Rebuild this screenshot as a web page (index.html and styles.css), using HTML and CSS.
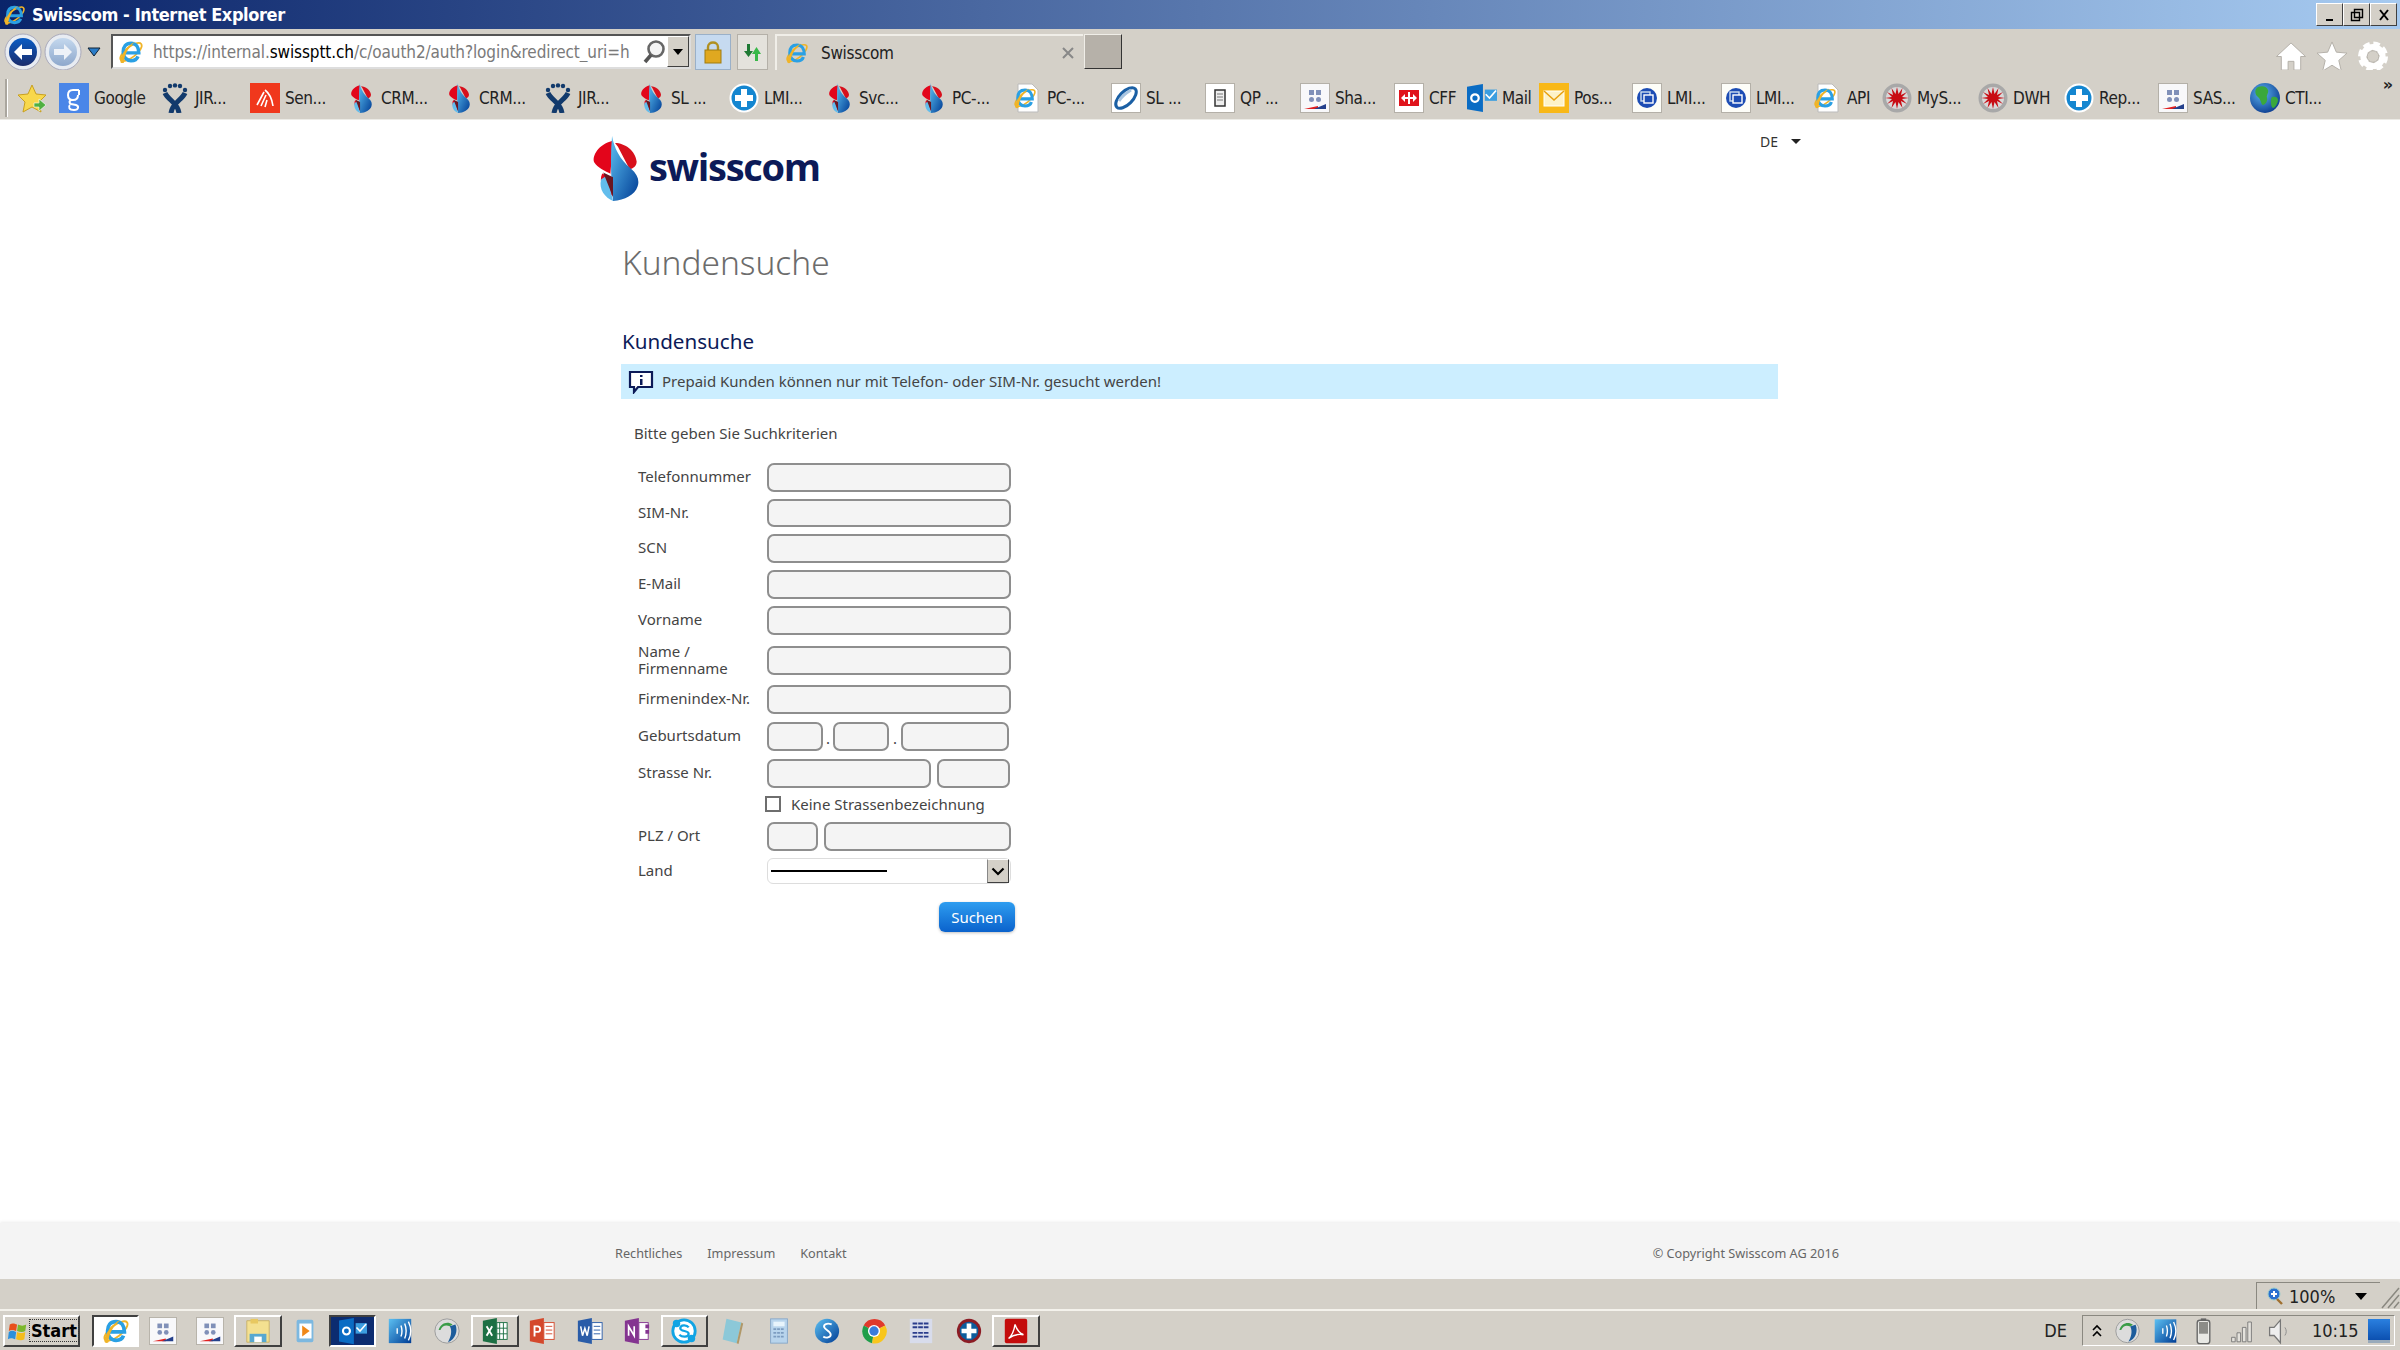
FILE: index.html
```html
<!DOCTYPE html>
<html lang="de">
<head>
    <meta charset="UTF-8">
    <title>Swisscom - Internet Explorer</title>
    <link rel="stylesheet" href="styles.css">
</head>
<body>
<svg class="defs" width="0" height="0">
    <defs>
        <linearGradient id="gBlue" x1="0" y1="0" x2="1" y2="1"><stop offset="0" stop-color="#5cc0f2"/><stop offset="1" stop-color="#003c94"/></linearGradient>
        <linearGradient id="gBack" x1="0" y1="0" x2="0" y2="1"><stop offset="0" stop-color="#0a5cc4"/><stop offset="1" stop-color="#1a2c6c"/></linearGradient>
        <linearGradient id="gForward" x1="0" y1="0" x2="0" y2="1"><stop offset="0" stop-color="#c4d8ee"/><stop offset="1" stop-color="#8ea8cc"/></linearGradient>
        <radialGradient id="gGlobe" cx=".4" cy=".35" r=".7"><stop offset="0" stop-color="#5cb4f0"/><stop offset="1" stop-color="#0c3c90"/></radialGradient>
        <symbol id="i-ie" viewBox="0 0 30 30">
            <ellipse cx="15" cy="15" rx="15" ry="6" transform="rotate(-38 15 15)" fill="none" stroke="#f0b428" stroke-width="2"/>
            <path d="M8 16h16c0-6-3-11-9-11S6 9 6 15s4 10 9 10c4 0 7-2 8-5" fill="none" stroke="#2aa0e4" stroke-width="4"/>
            <path d="M3 27C1 22 9 8 20 3 12 10 7 18 7 27c-1 1-3 1-4 0z" fill="#f0b428"/>
        </symbol>
        <symbol id="i-swiss" viewBox="0 0 48 66">
            <path d="M21 5C8 8 0 20 3 27c3 5 11 9 16 11l3 23C12 56 7 47 11 38l8 4 3-36z" fill="#e3051b"/>
            <path d="M24 7c10 0 21 8 22 19 0 5-4 7-7 8L27 11z" fill="#d8101c"/>
            <path d="M21 0c2 12 8 24 19 33 7 6 9 12 7 18-3 9-13 14-25 15-2-20-3-44-1-66z" fill="url(#gBlue)"/>
            <path d="M16 40l6 26c-8-3-15-12-12-22z" fill="#62bdec"/>
            <path d="M12 37l10 5v20z" fill="#6a1620"/>
        </symbol>
        <symbol id="i-jira" viewBox="0 0 26 30">
            <g fill="#123a6c"><circle cx="8" cy="3" r="2.200"/><circle cx="13" cy="2.400" r="2.200"/><circle cx="18" cy="3" r="2.200"/><circle cx="3" cy="7" r="2.200"/><circle cx="23" cy="7" r="2.200"/></g>
            <path d="M3 10c3 7 13 10 14 20M23 10c-3 7-13 10-14 20" fill="none" stroke="#123a6c" stroke-width="5"/>
        </symbol>
        <symbol id="i-google" viewBox="0 0 30 30">
            <rect width="30" height="30" fill="#4a86e8"/>
            <path d="M20 7h-6c-3 0-5 2-5 5s2 5 5 5 5-2 5-5M20 12v-5M12 17c-2 1-2 3 0 4l5 1c3 1 3 5-2 5s-6-3-4-5" fill="none" stroke="#fff" stroke-width="2"/>
        </symbol>
        <symbol id="i-sen" viewBox="0 0 30 30">
            <rect width="30" height="30" fill="#f0381c"/>
            <path d="M7 22l7-13M11 23l5-11M15 24l2-7M23 23c-1-7-4-13-8-16" fill="none" stroke="#fff" stroke-width="1.600"/>
        </symbol>
        <symbol id="i-plus" viewBox="0 0 30 30">
            <circle cx="15" cy="15" r="14.500" fill="#fff"/><circle cx="15" cy="15" r="12.500" fill="#1486d0"/>
            <path d="M12 6h6v6h6v6h-6v6h-6v-6H6v-6h6z" fill="#fff"/>
        </symbol>
        <symbol id="i-page" viewBox="0 0 30 30">
            <path d="M6 1h14l6 6v22H6z" fill="#fff" stroke="#bbb"/>
            <use href="#i-ie" x="1" y="3" width="24" height="24"/>
        </symbol>
        <symbol id="i-sl" viewBox="0 0 30 30">
            <rect x=".5" y=".5" width="29" height="29" fill="#fff" stroke="#b4b0a8"/>
            <ellipse cx="15" cy="15" rx="13" ry="6.500" transform="rotate(-45 15 15)" fill="none" stroke="#1a5fa4" stroke-width="3"/>
            <path d="M8 18c3-5 7-8 12-11" stroke="#a8c4e0" stroke-width="3" fill="none"/>
        </symbol>
        <symbol id="i-qp" viewBox="0 0 30 30">
            <rect x=".5" y=".5" width="29" height="29" fill="#fff" stroke="#b4b0a8"/>
            <rect x="10" y="7" width="10" height="16" fill="#eee" stroke="#333" stroke-width="1.500"/>
            <path d="M12 11h6M12 14h6M12 17h6" stroke="#777"/>
        </symbol>
        <symbol id="i-sha" viewBox="0 0 30 30">
            <rect x=".5" y=".5" width="29" height="29" fill="#f8f8fa" stroke="#b4b0a8"/>
            <g fill="#8090b8"><rect x="9" y="7" width="5" height="5"/><rect x="16" y="7" width="5" height="5"/><circle cx="11.500" cy="16.500" r="2.500"/><circle cx="18.500" cy="16.500" r="2.500"/></g>
            <path d="M4 26l14-3v3z" fill="#e02020"/><path d="M14 26l12-5v5z" fill="#24408c"/>
        </symbol>
        <symbol id="i-cff" viewBox="0 0 30 30">
            <rect x=".5" y=".5" width="29" height="29" fill="#fff" stroke="#b4b0a8"/>
            <rect x="5" y="7" width="20" height="16" fill="#e0141c"/>
            <path d="M7 15l4-4v3h8v-3l4 4-4 4v-3h-8v3z" fill="#fff"/>
            <path d="M14 9h2v12h-2z" fill="#fff"/>
        </symbol>
        <symbol id="i-outlook" viewBox="0 0 32 30">
            <path d="M0 3l17-3v30L0 27z" fill="#0a6cc4"/>
            <circle cx="8.500" cy="15" r="4" fill="none" stroke="#fff" stroke-width="2.400"/>
            <rect x="19" y="6" width="13" height="12" fill="#3c9ee0"/>
            <path d="M20 11l4 4 7-8" fill="none" stroke="#fff" stroke-width="1.800"/>
        </symbol>
        <symbol id="i-post" viewBox="0 0 30 30">
            <rect width="30" height="30" fill="#f8b818"/>
            <rect x="5" y="8" width="20" height="15" fill="#fdf2c8" stroke="#fff"/>
            <path d="M5 8l10 9 10-9" fill="none" stroke="#e8a010" stroke-width="1.500"/>
        </symbol>
        <symbol id="i-lmi" viewBox="0 0 30 30">
            <rect x=".5" y=".5" width="29" height="29" fill="#fdfdf8" stroke="#b4b0a8"/>
            <circle cx="15" cy="15" r="10" fill="#1c4cb4"/>
            <rect x="9" y="9" width="9" height="9" fill="none" stroke="#cde" stroke-width="1.400"/>
            <rect x="12" y="12" width="9" height="8" fill="#1c4cb4" stroke="#fff" stroke-width="1.400"/>
        </symbol>
        <symbol id="i-burst" viewBox="0 0 30 30">
            <circle cx="15" cy="15" r="14.500" fill="#a8a8a8"/><circle cx="15" cy="15" r="11" fill="#d8d8d8"/>
            <path d="M15 4l1.500 7 4-6-1.500 7 6-3-5 5 7 1-7 1 5 5-6-3 1.500 7-4-6-1.500 7-1.500-7-4 6 1.500-7-6 3 5-5-7-1 7-1-5-5 6 3-1.500-7 4 6z" fill="#c80c14"/>
        </symbol>
        <symbol id="i-globe" viewBox="0 0 30 30">
            <circle cx="15" cy="15" r="15" fill="url(#gGlobe)"/>
            <path d="M8 4c5-2 9 0 10 3s-2 5-1 8-2 7-4 7-2-6-5-8-4-8 0-10zM22 14c3-1 6 0 6 3s-3 8-5 8-3-9-1-11z" fill="#3aa83c"/>
        </symbol>
        <symbol id="i-flag" viewBox="0 0 24 24">
            <path d="M3 5c3-2 5-1 8 0l-1 7c-3-1-5-2-8 0z" fill="#e8501c"/>
            <path d="M12 5c3 1 5 2 9 0l-1 7c-3 2-6 1-9 0z" fill="#7cb82c"/>
            <path d="M2 13c3-2 5-1 8 0l-1 8c-3-1-5-2-8 0z" fill="#2c90dc"/>
            <path d="M11 13c3 1 5 2 9 0l-1 8c-3 2-6 1-9 0z" fill="#f4bc1c"/>
        </symbol>
        <symbol id="i-folder" viewBox="0 0 30 30">
            <path d="M3 4h24v23H3z" fill="#f4e090" stroke="#c8b068"/>
            <path d="M6 18h18v9H6z" fill="#58a8d0"/><path d="M11 21h8v6h-8z" fill="#fff"/><path d="M7 2h8v5H7z" fill="#e8c860"/>
        </symbol>
        <symbol id="i-media" viewBox="0 0 30 30">
            <rect x="6" y="3" width="18" height="24" rx="2" fill="#7cb8e0"/><rect x="9" y="7" width="13" height="16" fill="#fff"/>
            <path d="M12 9l8 6-8 6z" fill="#f08818"/>
        </symbol>
        <symbol id="i-wifi" viewBox="0 0 30 30">
            <path d="M3 2h24v26H3z" fill="url(#gBlue)"/>
            <path d="M12 12v6M16 9c1.500 4 1.500 8 0 12M20 7c2 5 2 11 0 16M24 5c3 6 3 14 0 20" fill="none" stroke="#fff" stroke-width="1.500"/>
        </symbol>
        <symbol id="i-lync" viewBox="0 0 30 30">
            <circle cx="15" cy="15" r="13" fill="#dcdcdc" stroke="#999"/>
            <path d="M6 14c2-7 9-10 15-6l-3 2c-4-2-8-1-10 4z" fill="#3a9c48"/>
            <path d="M24 8c3 7 0 16-8 19 3-5 5-12 2-17z" fill="#1c5c9c"/>
        </symbol>
        <symbol id="i-excel" viewBox="0 0 30 30">
            <path d="M2 4l15-3v28L2 26z" fill="#1c7044"/><rect x="17" y="6" width="11" height="18" fill="#fff" stroke="#1c7044"/>
            <path d="M6 10l6 10M12 10l-6 10" stroke="#fff" stroke-width="2"/><path d="M20 6v18M24 6v18M17 12h11M17 18h11" stroke="#1c7044"/>
        </symbol>
        <symbol id="i-ppt" viewBox="0 0 30 30">
            <path d="M2 4l15-3v28L2 26z" fill="#d4482c"/><rect x="17" y="6" width="11" height="18" fill="#fff" stroke="#d4482c"/>
            <path d="M7 21V10h3c4 0 4 6 0 6H7" fill="none" stroke="#fff" stroke-width="2"/><path d="M19 10h7M19 14h7M19 18h7" stroke="#d4482c"/>
        </symbol>
        <symbol id="i-word" viewBox="0 0 30 30">
            <path d="M2 4l15-3v28L2 26z" fill="#2a5ca8"/><rect x="17" y="6" width="11" height="18" fill="#fff" stroke="#2a5ca8"/>
            <path d="M5 10l2 10 2.500-8 2.500 8 2-10" fill="none" stroke="#fff" stroke-width="1.600"/><path d="M19 10h7M19 14h7M19 18h7" stroke="#2a5ca8"/>
        </symbol>
        <symbol id="i-one" viewBox="0 0 30 30">
            <path d="M2 4l15-3v28L2 26z" fill="#843490"/><rect x="17" y="6" width="10" height="18" fill="#fff" stroke="#843490"/>
            <path d="M6 20V10l6 10V10" fill="none" stroke="#fff" stroke-width="1.800"/><path d="M24 8h4v4h-4zM24 14h4v4h-4z" fill="#843490"/>
        </symbol>
        <symbol id="i-skype" viewBox="0 0 30 30">
            <circle cx="15" cy="15" r="12" fill="#fff" stroke="#10a4e4" stroke-width="3"/>
            <circle cx="7" cy="7" r="4" fill="#10a4e4"/><circle cx="23" cy="23" r="4" fill="#10a4e4"/>
            <path d="M20 11c-2-3-9-3-9 1 0 4 9 2 9 6 0 4-7 4-10 1" fill="none" stroke="#10a4e4" stroke-width="2.400"/>
        </symbol>
        <symbol id="i-note" viewBox="0 0 30 30">
            <path d="M9 2l16 4-5 22-15-4z" fill="#8cc8d8"/><path d="M25 6l2 1-5 22-2-1z" fill="#b09868"/>
        </symbol>
        <symbol id="i-calc" viewBox="0 0 30 30">
            <rect x="6" y="2" width="18" height="26" fill="#b8d4ec" stroke="#88a8c8"/><rect x="9" y="5" width="12" height="5" fill="#e8f4fc"/>
            <path d="M9 13h12M9 17h12M9 21h12" stroke="#7c9cc0" stroke-dasharray="3 1" stroke-width="2"/>
        </symbol>
        <symbol id="i-sphere" viewBox="0 0 30 30">
            <circle cx="15" cy="15" r="13" fill="url(#gBlue)"/>
            <path d="M20 8c-5-2-9 0-8 3 1 3 7 4 7 8 0 3-5 4-8 2" fill="none" stroke="#fff" stroke-width="2"/>
        </symbol>
        <symbol id="i-chrome" viewBox="0 0 30 30">
            <path d="M15 15L4 9a13 13 0 0 1 23 0z" fill="#e0392c"/><path d="M15 15L4 9a13 13 0 0 0 9 19z" fill="#1f9e4a"/><path d="M15 15l12-6a13 13 0 0 1-14 19z" fill="#f8c61c"/>
            <circle cx="15" cy="15" r="6.500" fill="#fff"/><circle cx="15" cy="15" r="5" fill="#3a7cdc"/>
        </symbol>
        <symbol id="i-pdark" viewBox="0 0 30 30">
            <circle cx="15" cy="15" r="13" fill="#8c1c24"/><circle cx="15" cy="15" r="10" fill="#0c5c9c"/>
            <path d="M12.500 7h5v5.500H23v5h-5.500V23h-5v-5.500H7v-5h5.500z" fill="#fff"/>
        </symbol>
        <symbol id="i-pdf" viewBox="0 0 30 30">
            <rect x="3" y="2" width="24" height="26" rx="2" fill="#c40c0c"/>
            <path d="M7 23c4-3 6-9 7-15 2 6 4 9 9 11-5-1-11 0-16 4z" fill="none" stroke="#fff" stroke-width="1.500"/>
        </symbol>
        <symbol id="i-sym" viewBox="0 0 30 30">
            <rect x="3" y="2" width="24" height="26" fill="#d8dcec"/>
            <path d="M6 7h18M6 11h18M6 17h18M6 21h18" stroke="#2a3c8c" stroke-width="2" stroke-dasharray="5 1"/>
        </symbol>
    </defs>
</svg>

<div class="window">
    <div class="titlebar">
        <svg class="title-icon"><use href="#i-ie"/></svg>
        <span class="title-text">Swisscom - Internet Explorer</span>
        <div class="win-buttons">
            <button class="win-btn"><svg width="12" height="14"><path d="M2 11h7v2H2z" fill="#000"/></svg></button>
            <button class="win-btn"><svg width="14" height="14"><path d="M4.500 1.500h8v8h-8zM1.500 4.500h8v8h-8z" fill="#d4d0c8" stroke="#000" stroke-width="1.400"/></svg></button>
            <button class="win-btn"><svg width="14" height="14"><path d="M3 2l8 10M11 2L3 12" stroke="#000" stroke-width="2"/></svg></button>
        </div>
    </div>

    <div class="toolbar">
        <svg class="nav-btn" viewBox="0 0 38 38"><circle cx="19" cy="19" r="18" fill="#e8ecf2" stroke="#aab"/><circle cx="19" cy="19" r="14" fill="url(#gBack)"/><path d="M10 19l8-8v5h10v6H18v5z" fill="#fff"/></svg>
        <svg class="nav-btn" viewBox="0 0 38 38"><circle cx="19" cy="19" r="18" fill="#e8ecf2" stroke="#aab"/><circle cx="19" cy="19" r="14" fill="url(#gForward)"/><path d="M28 19l-8-8v5H10v6h10v5z" fill="#eef2f8"/></svg>
        <svg class="nav-drop" viewBox="0 0 14 10"><path d="M1 1h12L7 9z" fill="#2a7cc8" stroke="#123"/></svg>
        <div class="addressbar">
            <svg class="addr-icon"><use href="#i-ie"/></svg>
            <span class="url"><span class="url-dim">https://internal.</span><b>swissptt.ch</b><span class="url-dim">/c/oauth2/auth?login&amp;redirect_uri=h</span></span>
            <svg class="addr-search" viewBox="0 0 24 26"><circle cx="14" cy="10" r="7.500" fill="#f4f4f4" stroke="#666" stroke-width="2.600"/><path d="M9 16l-6 7" stroke="#555" stroke-width="3.600"/></svg>
            <div class="addr-drop"><svg width="10" height="6"><path d="M0 0h10L5 6z" fill="#000"/></svg></div>
        </div>
        <div class="lock-btn"><svg width="18" height="24" viewBox="0 0 18 24"><path d="M4 11V7c0-6 10-6 10 0v4" fill="none" stroke="#b09020" stroke-width="2.400"/><rect x="1" y="10" width="16" height="13" fill="#e0a820" stroke="#a07c10"/></svg></div>
        <div class="refresh-btn"><svg width="20" height="22" viewBox="0 0 20 22"><path d="M4 3h3v7h3l-4.500 6L1 10h3z" fill="#1f7a34"/><path d="M15 20h-3v-7H9l4.500-7 4.500 7h-3z" fill="#38b848"/></svg></div>
        <div class="tab">
            <svg class="tab-icon"><use href="#i-ie"/></svg>
            <span class="tab-text">Swisscom</span>
            <svg class="tab-close" width="14" height="14"><path d="M2 2l10 10M12 2L2 12" stroke="#888" stroke-width="2"/></svg>
        </div>
        <div class="new-tab"></div>
        <div class="tool-right">
            <svg class="tool-icon" viewBox="0 0 32 32"><path d="M16 2L1 16h5v14h7v-9h6v9h7V16h5z" fill="#fff" stroke="#b4b0a8"/></svg>
            <svg class="tool-icon" viewBox="0 0 32 32"><path d="M16 1l4.500 10.500 11 1-8.500 7.500 2.600 11L16 25l-9.600 6L9 20 .5 12.500l11-1z" fill="#fff" stroke="#b4b0a8"/></svg>
            <svg class="tool-icon" viewBox="0 0 32 32"><circle cx="16" cy="16" r="10" fill="none" stroke="#fff" stroke-width="6"/><circle cx="16" cy="16" r="10" fill="none" stroke="#fff" stroke-width="11" stroke-dasharray="5 2.850"/><circle cx="16" cy="16" r="6" fill="#d4d0c8" stroke="#b4b0a8"/></svg>
        </div>
    </div>

    <div class="favbar">
        <div class="fav-sep"></div>
        <svg class="fav-star" viewBox="0 0 30 30"><path d="M14 2l4 9 10 1-7 7 2 10-9-5-9 5 2-10-7-7 10-1z" fill="#f8d84c" stroke="#c8a020"/><path d="M16 20h5v-4l7 6-7 6v-4h-5z" fill="#50b040" stroke="#fff" stroke-width=".6"/></svg>
        <div class="fav-list">
            <a class="fav"><svg class="fav-icon"><use href="#i-google"/></svg>Google</a>
            <a class="fav"><svg class="fav-icon"><use href="#i-jira"/></svg>JIR...</a>
            <a class="fav"><svg class="fav-icon"><use href="#i-sen"/></svg>Sen...</a>
            <a class="fav"><svg class="fav-icon"><use href="#i-swiss"/></svg>CRM...</a>
            <a class="fav"><svg class="fav-icon"><use href="#i-swiss"/></svg>CRM...</a>
            <a class="fav"><svg class="fav-icon"><use href="#i-jira"/></svg>JIR...</a>
            <a class="fav"><svg class="fav-icon"><use href="#i-swiss"/></svg>SL ...</a>
            <a class="fav"><svg class="fav-icon"><use href="#i-plus"/></svg>LMI...</a>
            <a class="fav"><svg class="fav-icon"><use href="#i-swiss"/></svg>Svc...</a>
            <a class="fav"><svg class="fav-icon"><use href="#i-swiss"/></svg>PC-...</a>
            <a class="fav"><svg class="fav-icon"><use href="#i-page"/></svg>PC-...</a>
            <a class="fav"><svg class="fav-icon"><use href="#i-sl"/></svg>SL ...</a>
            <a class="fav"><svg class="fav-icon"><use href="#i-qp"/></svg>QP ...</a>
            <a class="fav"><svg class="fav-icon"><use href="#i-sha"/></svg>Sha...</a>
            <a class="fav"><svg class="fav-icon"><use href="#i-cff"/></svg>CFF</a>
            <a class="fav"><svg class="fav-icon"><use href="#i-outlook"/></svg>Mail</a>
            <a class="fav"><svg class="fav-icon"><use href="#i-post"/></svg>Pos...</a>
            <a class="fav"><svg class="fav-icon"><use href="#i-lmi"/></svg>LMI...</a>
            <a class="fav"><svg class="fav-icon"><use href="#i-lmi"/></svg>LMI...</a>
            <a class="fav"><svg class="fav-icon"><use href="#i-page"/></svg>API</a>
            <a class="fav"><svg class="fav-icon"><use href="#i-burst"/></svg>MyS...</a>
            <a class="fav"><svg class="fav-icon"><use href="#i-burst"/></svg>DWH</a>
            <a class="fav"><svg class="fav-icon"><use href="#i-plus"/></svg>Rep...</a>
            <a class="fav"><svg class="fav-icon"><use href="#i-sha"/></svg>SAS...</a>
            <a class="fav"><svg class="fav-icon"><use href="#i-globe"/></svg>CTI...</a>
        </div>
        <span class="fav-more">»</span>
    </div>

    <main class="content">
        <div class="page-head">
            <div class="logo">
                <svg class="logo-mark"><use href="#i-swiss"/></svg>
                <span class="logo-text">swisscom</span>
            </div>
            <div class="lang">DE <svg width="10" height="5"><path d="M0 0h10L5 5z" fill="#222"/></svg></div>
        </div>

        <div class="page-body">
            <h1>Kundensuche</h1>
            <h2>Kundensuche</h2>
            <div class="notice">
                <svg class="notice-icon" viewBox="0 0 26 24"><path d="M2 2h22v15H10l-4 5v-5H2z" fill="#fff" stroke="#0c1a58" stroke-width="2.200"/><path d="M12 5h2.500v2H12zM12 9h2.500v6H12z" fill="#0c1a58"/></svg>
                <span>Prepaid Kunden können nur mit Telefon- oder SIM-Nr. gesucht werden!</span>
            </div>
            <p class="hint">Bitte geben Sie Suchkriterien</p>

            <form class="search-form">
                <div class="row row-first"><label>Telefonnummer</label><input class="field-full"></div>
                <div class="row row-sim"><label>SIM-Nr.</label><input class="field-full"></div>
                <div class="row"><label>SCN</label><input class="field-full"></div>
                <div class="row"><label>E-Mail</label><input class="field-full"></div>
                <div class="row"><label>Vorname</label><input class="field-full"></div>
                <div class="row row-name"><label>Name /<br>Firmenname</label><input class="field-full"></div>
                <div class="row row-index"><label>Firmenindex-Nr.</label><input class="field-full"></div>
                <div class="row row-date">
                    <label>Geburtsdatum</label>
                    <input class="f-day"><span class="dot">.</span><input class="f-day"><span class="dot">.</span><input class="f-year">
                </div>
                <div class="row row-date">
                    <label>Strasse Nr.</label>
                    <input class="f-street"><input class="f-no">
                </div>
                <div class="row-check">
                    <span class="check"></span>
                    <span>Keine Strassenbezeichnung</span>
                </div>
                <div class="row row-plz">
                    <label>PLZ / Ort</label>
                    <input class="f-plz"><input class="f-ort">
                </div>
                <div class="row row-land">
                    <label>Land</label>
                    <div class="select">
                        <span class="select-line"></span>
                        <span class="select-btn"><svg width="14" height="9"><path d="M1.500 1.500L7 7l5.500-5.500" fill="none" stroke="#000" stroke-width="2.200"/></svg></span>
                    </div>
                </div>
                <div class="form-actions"><button type="button" class="btn-search">Suchen</button></div>
            </form>
        </div>
    </main>

    <footer class="site-footer">
        <nav class="footer-links"><a>Rechtliches</a><a>Impressum</a><a>Kontakt</a></nav>
        <span class="copyright">© Copyright Swisscom AG 2016</span>
    </footer>

    <div class="statusbar">
        <div class="zoom-box">
            <svg width="16" height="18" viewBox="0 0 16 18"><circle cx="7" cy="7" r="6" fill="#2a70d0" stroke="#9cc"/><path d="M4 7h6M7 4v6" stroke="#fff" stroke-width="2"/><path d="M10 12l5 5" stroke="#a07030" stroke-width="2.400"/></svg>
            <span class="zoom-text">100%</span>
            <svg class="zoom-arrow" width="12" height="7"><path d="M0 0h12L6 7z" fill="#000"/></svg>
        </div>
        <svg class="grip" width="20" height="27"><path d="M2 26L19 6M8 26L19 13M14 26l5-6" stroke="#8a8880" stroke-width="1.500"/></svg>
    </div>

    <div class="taskbar">
        <button class="start-btn"><svg width="24" height="24"><use href="#i-flag"/></svg><span class="start-text">Start</span></button>
        <div class="task-list">
            <span class="task task-pressed"><svg class="task-icon"><use href="#i-ie"/></svg></span>
            <span class="task"><svg class="task-icon"><use href="#i-sha"/></svg></span>
            <span class="task"><svg class="task-icon"><use href="#i-sha"/></svg></span>
            <span class="task task-raised"><svg class="task-icon"><use href="#i-folder"/></svg></span>
            <span class="task"><svg class="task-icon"><use href="#i-media"/></svg></span>
            <span class="task task-dark"><svg class="task-icon"><use href="#i-outlook"/></svg></span>
            <span class="task"><svg class="task-icon"><use href="#i-wifi"/></svg></span>
            <span class="task"><svg class="task-icon"><use href="#i-lync"/></svg></span>
            <span class="task task-raised"><svg class="task-icon"><use href="#i-excel"/></svg></span>
            <span class="task"><svg class="task-icon"><use href="#i-ppt"/></svg></span>
            <span class="task"><svg class="task-icon"><use href="#i-word"/></svg></span>
            <span class="task"><svg class="task-icon"><use href="#i-one"/></svg></span>
            <span class="task task-raised"><svg class="task-icon"><use href="#i-skype"/></svg></span>
            <span class="task"><svg class="task-icon"><use href="#i-note"/></svg></span>
            <span class="task"><svg class="task-icon"><use href="#i-calc"/></svg></span>
            <span class="task"><svg class="task-icon"><use href="#i-sphere"/></svg></span>
            <span class="task"><svg class="task-icon"><use href="#i-chrome"/></svg></span>
            <span class="task"><svg class="task-icon"><use href="#i-sym"/></svg></span>
            <span class="task"><svg class="task-icon"><use href="#i-pdark"/></svg></span>
            <span class="task task-raised"><svg class="task-icon"><use href="#i-pdf"/></svg></span>
        </div>
        <span class="kbd-lang">DE</span>
        <div class="tray">
            <svg class="tray-chevron" width="10" height="14"><path d="M1 6l4-4 4 4M1 12l4-4 4 4" fill="none" stroke="#000" stroke-width="1.600"/></svg>
            <svg class="tray-icon"><use href="#i-lync"/></svg>
            <svg class="tray-icon"><use href="#i-wifi"/></svg>
            <svg class="tray-icon" viewBox="0 0 30 30"><rect x="8" y="3" width="14" height="26" rx="3" fill="#e8e8e4" stroke="#666" stroke-width="1.500"/><rect x="10" y="5" width="10" height="13" fill="#8c8c88"/><rect x="12" y="1" width="6" height="2" fill="#666"/></svg>
            <svg class="tray-icon" viewBox="0 0 30 30"><path d="M4 27v-5h4v5zM10 27V17h4v10zM16 27V11h4v16zM22 27V5h4v22z" fill="#e4e2dc" stroke="#777"/></svg>
            <svg class="tray-icon" viewBox="0 0 30 30"><path d="M4 11h5l7-8v25l-7-8H4z" fill="#eee" stroke="#777" stroke-width="1.400"/><path d="M21 11c2 3 2 6 0 9" fill="none" stroke="#888"/></svg>
            <span class="clock">10:15</span>
            <span class="show-desktop"></span>
        </div>
    </div>
</div>
</body>
</html>
```

FILE: styles.css
```css
* {
    box-sizing: border-box;
}

html, body {
    margin: 0;
    padding: 0;
}

body {
    font-family: "Noto Sans", Arial, sans-serif;
    color: #444;
    background-color: #fff;
}

.defs {
    position: absolute;
}

.window {
    width: 2400px;
    height: 1350px;
    display: flex;
    flex-direction: column;
    overflow: hidden;
}

/* IE chrome */
.titlebar {
    height: 29px;
    flex: none;
    display: flex;
    align-items: center;
    padding-left: 3px;
    background: linear-gradient(to right, #0a246a, #a6caf0);
}

.title-icon {
    width: 23px;
    height: 24px;
}

.title-text {
    margin-left: 6px;
    font-family: "DejaVu Sans Condensed", "DejaVu Sans", sans-serif;
    font-size: 18px;
    font-weight: 700;
    letter-spacing: -.4px;
    color: #fff;
}

.win-buttons {
    margin-left: auto;
    margin-right: 3px;
    display: flex;
}

.win-btn {
    width: 27px;
    height: 23px;
    padding: 0;
    display: flex;
    align-items: center;
    justify-content: center;
    background-color: #d4d0c8;
    border: 1px solid;
    border-color: #fff #404040 #404040 #fff;
}

.toolbar {
    height: 41px;
    flex: none;
    display: flex;
    align-items: center;
    padding-top: 4px;
    padding-left: 4px;
    background-color: #d4d0c8;
}

.nav-btn {
    width: 38px;
    height: 38px;
    margin-right: 2px;
}

.nav-drop {
    width: 14px;
    height: 10px;
    margin: 0 10px 0 3px;
}

.addressbar {
    width: 580px;
    height: 35px;
    display: flex;
    align-items: center;
    padding-left: 5px;
    background-color: #fff;
    border: 2px solid;
    border-color: #555 #ddd #ddd #555;
}

.addr-icon {
    width: 26px;
    height: 28px;
}

.url {
    width: 480px;
    margin-left: 9px;
    font-family: "DejaVu Sans Condensed", "DejaVu Sans", sans-serif;
    font-size: 17px;
    letter-spacing: -.1px;
    white-space: nowrap;
    overflow: hidden;
    color: #000;
}

.url b {
    font-weight: 400;
}

.url-dim {
    color: #7a7a7a;
}

.addr-search {
    width: 24px;
    height: 26px;
    margin-left: 9px;
}

.addr-drop {
    width: 22px;
    height: 31px;
    margin-left: auto;
    display: flex;
    align-items: center;
    justify-content: center;
    background-color: #d4d0c8;
    border: 1px solid;
    border-color: #fff #404040 #404040 #fff;
}

.lock-btn {
    width: 36px;
    height: 36px;
    margin-left: 4px;
    display: flex;
    align-items: center;
    justify-content: center;
    background-color: #c6daf0;
    border: 1px solid #9ab0c8;
}

.refresh-btn {
    width: 31px;
    height: 36px;
    margin-left: 6px;
    display: flex;
    align-items: center;
    justify-content: center;
    background-color: #e4e2dc;
    border: 1px solid #b4b0a8;
}

.tab {
    width: 308px;
    height: 36px;
    margin-left: 7px;
    display: flex;
    align-items: center;
    padding-left: 8px;
    border-top: 2px solid #f0eee8;
    border-left: 2px solid #f0eee8;
}

.tab-icon {
    width: 24px;
    height: 26px;
}

.tab-text {
    margin-left: 12px;
    font-family: "DejaVu Sans Condensed", "DejaVu Sans", sans-serif;
    font-size: 17px;
    letter-spacing: -.3px;
    color: #222;
}

.tab-close {
    margin-left: auto;
    margin-right: 8px;
}

.new-tab {
    width: 38px;
    height: 35px;
    margin-left: 1px;
    background-color: #b6b1a9;
    border: 1px solid;
    border-color: #f0eee8 #333 #333 #f0eee8;
}

.tool-right {
    margin-left: auto;
    margin-top: 10px;
    margin-right: 11px;
    display: flex;
    gap: 9px;
}

.tool-icon {
    width: 32px;
    height: 31px;
}

.favbar {
    height: 50px;
    flex: none;
    display: flex;
    align-items: center;
    position: relative;
    padding-top: 6px;
    padding-left: 5px;
    background-color: #d4d0c8;
    border-bottom: 1px solid #ecebe6;
}

.fav-sep {
    width: 3px;
    height: 38px;
    background-color: #aaa69e;
    border-right: 1px solid #fff;
}

.fav-star {
    width: 30px;
    height: 30px;
    margin-left: 10px;
    margin-right: 11px;
}

/* each bookmark keeps the width IE gave it */
.fav-list {
    display: grid;
    grid-template-columns: 101px 90px 96px 98px 99px 93px 93px 95px 93px 95px 99px 94px 95px 94px 73px 72px 93px 89px 91px 70px 96px 86px 94px 92px auto;
}

.fav {
    display: flex;
    align-items: center;
    gap: 5px;
    font-family: "DejaVu Sans Condensed", "DejaVu Sans", sans-serif;
    font-size: 17px;
    letter-spacing: -.4px;
    color: #222;
}

.fav-icon {
    width: 30px;
    height: 30px;
    flex: none;
}

.fav-more {
    position: absolute;
    top: 5px;
    right: 7px;
    font-family: "DejaVu Sans", sans-serif;
    font-size: 16px;
    font-weight: 700;
    color: #222;
}

/* page */
.content {
    flex: 1;
    padding-top: 17px;
    padding-left: 591px;
}

.page-head {
    width: 1211px;
    display: flex;
    justify-content: space-between;
}

.logo {
    height: 65px;
    display: flex;
    align-items: flex-start;
}

.logo-mark {
    width: 48px;
    height: 65px;
    margin-top: -1px;
}

.logo-text {
    margin-left: 10px;
    margin-top: 4px;
    font-family: "Open Sans", sans-serif;
    font-size: 38px;
    line-height: 50px;
    font-weight: 700;
    letter-spacing: -1.300px;
    color: #0c1a58;
}

.lang {
    margin-top: -5px;
    padding-right: 1px;
    display: flex;
    align-items: center;
    gap: 13px;
    height: 18px;
    font-size: 14px;
    color: #333;
}

.page-body {
    margin-left: 30px;
    width: 1157px;
}

h1 {
    margin: 40px 0 0 1px;
    font-family: "Noto Sans", sans-serif;
    font-size: 33.400px;
    line-height: 40px;
    font-weight: 300;
    color: #6c6c6c;
}

h2 {
    margin: 46px 0 0 1px;
    font-size: 20.600px;
    line-height: 26px;
    font-weight: 400;
    color: #0c1a58;
}

.notice {
    height: 35px;
    margin-top: 10px;
    display: flex;
    align-items: center;
    padding-left: 7px;
    padding-bottom: 2px;
    font-size: 15px;
    background-color: #cceeff;
}

.notice-icon {
    width: 26px;
    height: 24px;
    margin-top: 3px;
    margin-right: 8px;
}

.hint {
    margin: 24px 0 0 13px;
    font-size: 15px;
    line-height: 20px;
}

.search-form {
    margin-top: 20px;
    padding-left: 17px;
    font-size: 15px;
}

.row {
    height: 29px;
    margin-top: 7px;
    display: flex;
    align-items: center;
}

.row-first {
    margin-top: 0;
}

.row-sim {
    height: 28px;
}

.row-name {
    margin-top: 11px;
}

.row-index {
    margin-top: 10px;
}

.row-date {
    margin-top: 8px;
}

.row-plz {
    margin-top: 10px;
}

.row-land {
    height: 26px;
}

.row label {
    width: 129px;
    flex: none;
    margin-top: -2px;
    line-height: 17px;
}

.row input {
    height: 100%;
    padding: 0;
    background-color: #f4f4f4;
    border: 2px solid #8e8e8e;
    border-radius: 7px;
}

.field-full {
    width: 244px;
}

.f-day {
    width: 56px;
}

.dot {
    width: 10px;
    text-align: center;
    margin-top: 4px;
    line-height: 1;
}

.f-day + .dot + .f-day + .dot {
    width: 12px;
}

.f-year {
    width: 108px;
}

.f-street {
    width: 164px;
}

.f-no {
    width: 73px;
    margin-left: 6px;
}

.f-plz {
    width: 51px;
}

.f-ort {
    width: 187px;
    margin-left: 6px;
}

.row-check {
    height: 16px;
    margin-top: 8px;
    margin-left: 127px;
    display: flex;
    align-items: center;
    gap: 10px;
}

.check {
    width: 16px;
    height: 16px;
    background-color: #fff;
    border: 2px solid #6e6e6e;
}

.select {
    width: 244px;
    height: 26px;
    display: flex;
    align-items: center;
    justify-content: space-between;
    padding: 0 1px 0 3px;
    background-color: #fff;
    border: 1px solid #ddd;
    border-radius: 6px;
}

.select-line {
    width: 116px;
    height: 2px;
    background-color: #000;
}

.select-btn {
    width: 22px;
    height: 24px;
    display: flex;
    align-items: center;
    justify-content: center;
    background-color: #d4d0c8;
    border: 1px solid;
    border-color: #fff #404040 #404040 #888;
}

.form-actions {
    margin-top: 18px;
    padding-left: 301px;
}

.btn-search {
    width: 76px;
    height: 30px;
    padding: 0;
    font-family: inherit;
    font-size: 15px;
    color: #fff;
    background: linear-gradient(to bottom, #2e9df0, #0a62cc);
    border: none;
    border-radius: 6px;
    box-shadow: 0 1px 3px rgba(0, 0, 0, .25);
}

/* footer */
.site-footer {
    height: 56px;
    flex: none;
    display: flex;
    align-items: center;
    padding-top: 4px;
    padding-left: 615px;
    background-color: #f4f4f4;
    box-shadow: 0 -1px 3px rgba(0, 0, 0, .08);
    font-size: 12.700px;
    color: #666;
}

.footer-links {
    display: flex;
    gap: 25px;
}

.copyright {
    margin-left: 806px;
}

.statusbar {
    height: 32px;
    flex: none;
    display: flex;
    justify-content: flex-end;
    align-items: flex-end;
    background-color: #d4d0c8;
    border-bottom: 2px solid #f4f2ec;
}

.zoom-box {
    width: 124px;
    height: 27px;
    display: flex;
    align-items: center;
    padding-left: 10px;
    border-top: 1px solid #8a8880;
    border-left: 1px solid #8a8880;
}

.zoom-text {
    margin-left: 6px;
    font-family: "DejaVu Sans Condensed", "DejaVu Sans", sans-serif;
    font-size: 18px;
    color: #222;
}

.zoom-arrow {
    margin-left: auto;
    margin-right: 13px;
}

.grip {
    flex: none;
}

/* windows taskbar */
.taskbar {
    height: 39px;
    flex: none;
    display: flex;
    align-items: center;
    padding-left: 3px;
    background-color: #d4d0c8;
}

.start-btn {
    width: 77px;
    height: 32px;
    padding: 0 0 0 2px;
    display: flex;
    align-items: center;
    background-color: #d4d0c8;
    border: 2px solid;
    border-color: #fff #404040 #404040 #fff;
}

.start-text {
    margin-left: 1px;
    padding: 0 1px;
    font-family: "DejaVu Sans Condensed", "DejaVu Sans", sans-serif;
    font-size: 18px;
    font-weight: 700;
    color: #000;
    outline: 1px dotted #333;
}

.task-list {
    display: flex;
    margin-left: 12px;
}

.task {
    width: 47.400px;
    height: 32px;
    flex: none;
    display: flex;
    align-items: center;
    justify-content: center;
}

.task-icon {
    width: 28px;
    height: 28px;
}

.task-raised {
    border: 2px solid;
    border-color: #fff #404040 #404040 #fff;
}

.task-pressed {
    background-color: #fff;
    border: 2px solid;
    border-color: #404040 #fff #fff #404040;
}

.task-dark {
    border: 2px solid;
    border-color: #404040 #fff #fff #404040;
    background-color: #0c2c70;
}

.kbd-lang {
    margin-left: auto;
    font-family: "DejaVu Sans Condensed", "DejaVu Sans", sans-serif;
    font-size: 18px;
    color: #222;
}

.tray {
    width: 313px;
    height: 31px;
    margin-left: 15px;
    margin-right: 5px;
    display: flex;
    align-items: center;
    padding-left: 9px;
    border: 1px solid;
    border-color: #8a8880 #fff #fff #8a8880;
}

.tray-chevron {
    margin-right: 12px;
}

.tray-icon {
    width: 27px;
    height: 28px;
    margin-right: 11px;
}

.clock {
    margin-left: 8px;
    font-family: "DejaVu Sans Condensed", "DejaVu Sans", sans-serif;
    font-size: 18px;
    color: #222;
}

.show-desktop {
    width: 22px;
    height: 24px;
    margin-left: 9px;
    background: linear-gradient(to bottom, #2a80e0, #0c50b0);
    border-bottom: 3px solid #9ab;
}
```
